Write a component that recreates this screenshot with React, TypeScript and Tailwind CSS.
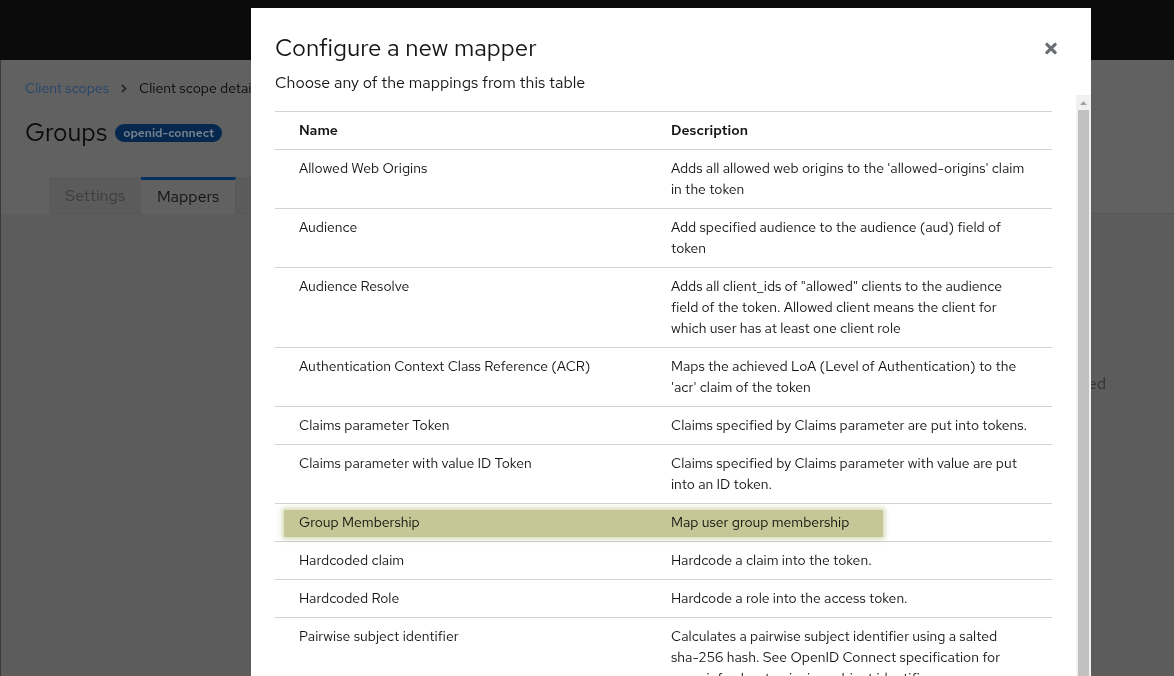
import React from "react";

type Row = { name: string; desc: string[]; highlight?: boolean };

const rows: Row[] = [
  { name: "Allowed Web Origins", desc: ["Adds all allowed web origins to the 'allowed-origins' claim", "in the token"] },
  { name: "Audience", desc: ["Add specified audience to the audience (aud) field of", "token"] },
  {
    name: "Audience Resolve",
    desc: [
      'Adds all client_ids of "allowed" clients to the audience',
      "field of the token. Allowed client means the client for",
      "which user has at least one client role",
    ],
  },
  {
    name: "Authentication Context Class Reference (ACR)",
    desc: ["Maps the achieved LoA (Level of Authentication) to the", "'acr' claim of the token"],
  },
  { name: "Claims parameter Token", desc: ["Claims specified by Claims parameter are put into tokens."] },
  {
    name: "Claims parameter with value ID Token",
    desc: ["Claims specified by Claims parameter with value are put", "into an ID token."],
  },
  { name: "Group Membership", desc: ["Map user group membership"], highlight: true },
  { name: "Hardcoded claim", desc: ["Hardcode a claim into the token."] },
  { name: "Hardcoded Role", desc: ["Hardcode a role into the access token."] },
  {
    name: "Pairwise subject identifier",
    desc: [
      "Calculates a pairwise subject identifier using a salted",
      "sha-256 hash. See OpenID Connect specification for",
      "more info about pairwise subject identifiers.",
    ],
  },
];

function CloseIcon() {
  return (
    <svg width="12" height="17" viewBox="0 0 352 512" fill="#6a6e73" aria-hidden="true">
      <path d="M242.72 256l100.07-100.07c12.28-12.28 12.28-32.19 0-44.48l-22.24-22.24c-12.28-12.28-32.19-12.28-44.48 0L176 189.28 75.930 89.21c-12.28-12.28-32.19-12.28-44.48 0L9.21 111.45c-12.28 12.28-12.28 32.19 0 44.48L109.28 256 9.21 356.07c-12.28 12.28-12.28 32.19 0 44.48l22.24 22.24c12.28 12.28 32.2 12.28 44.48 0L176 322.72l100.07 100.07c12.28 12.28 32.2 12.28 44.48 0l22.24-22.24c12.28-12.28 12.28-32.19 0-44.48L242.72 256z" />
    </svg>
  );
}

export default function App() {
  return (
    <div className="relative h-[676px] w-[1174px] overflow-hidden font-['Red_Hat_Text',Roboto,sans-serif] text-[#151515]">
      {/* dimmed background page */}
      <div className="flex h-full flex-col bg-[#616161]">
        <header className="h-[60px] shrink-0 bg-[#0b0b0b]" />
        <div className="flex flex-1 flex-col border-l border-[#3a3a3a]">
          <div className="pl-6 pt-[18px]">
            <nav className="flex items-center text-[14px] leading-[20px]">
              <span className="text-[#23466b]">Client scopes</span>
              <svg className="mx-[12px]" width="6" height="9" viewBox="0 0 6 9" aria-hidden="true">
                <path d="M1 1l3.5 3.5L1 8" stroke="#2a2a2a" strokeWidth="1.8" fill="none" />
              </svg>
              <span className="text-[#0a0a0a]">Client scope details</span>
            </nav>
            <div className="mt-5 flex items-center gap-2">
              <h1 className="text-[25px] leading-[30px] text-[#0a0a0a]">Groups</h1>
              <span className="rounded-full bg-[#06284e] px-2 text-[12px] font-semibold leading-[18px] text-[#77828f]">
                openid-connect
              </span>
            </div>
            <div className="mt-[29px] flex pl-6 text-[16px] leading-[24px]">
              <div className="flex h-[37px] items-center border-b border-[#575757] bg-[#5b5b5b] px-4 pt-[2px] text-[#3d3d3d]">
                Settings
              </div>
              <div className="flex h-[37px] items-center border-r border-t-[3px] border-r-[#575757] border-t-[#03305e] px-4 text-[#121212]">
                Mappers
              </div>
              <div className="flex h-[37px] items-center border-b border-[#575757] bg-[#5b5b5b] px-4 pt-[2px] text-[#3d3d3d]">
                Scope
              </div>
              <div className="flex-1 border-b border-[#575757]" />
            </div>
          </div>
          <div className="flex-1 bg-[#5c5c5c] pr-[68px] pt-[158px] text-right text-[16px] leading-[24px] text-[#323333]">
            No mappers have been added yet. Add predefined
          </div>
        </div>
      </div>

      {/* modal */}
      <div className="absolute left-[251px] top-[8px] w-[840px] bg-white">
        <div className="flex items-start justify-between pl-6 pr-[34px] pt-6">
          <h2 className="text-[24px] leading-[31px] text-[#151515]">Configure a new mapper</h2>
          <button className="mt-[8px] flex items-center" aria-label="Close">
            <CloseIcon />
          </button>
        </div>
        <p className="mt-[8px] pl-6 text-[16px] leading-[24px] text-[#151515]">
          Choose any of the mappings from this table
        </p>
        <div className="flex">
          <div className="flex-1 px-6 pt-4">
            <div className="border-t border-[#d2d2d2] text-[14px] leading-[21px]">
              <div className="grid grid-cols-[372px_405px] border-b border-[#d2d2d2] font-semibold">
                <div className="px-6 py-2">Name</div>
                <div className="px-6 py-2">Description</div>
              </div>
              {rows.map((r) => (
                <div key={r.name} className="relative grid grid-cols-[372px_405px] border-b border-[#d2d2d2]">
                  <div className="px-6 py-2 whitespace-nowrap">{r.name}</div>
                  <div className="px-6 py-2 whitespace-nowrap">
                    {r.desc.map((l, i) => (
                      <div key={i}>{l}</div>
                    ))}
                  </div>
                  {r.highlight && (
                    <div className="pointer-events-none absolute left-[9px] top-[6px] h-[27px] w-[599px] bg-[#c5c896] mix-blend-multiply shadow-[0_0_5px_2px_rgba(180,185,120,0.55)]" />
                  )}
                </div>
              ))}
            </div>
          </div>
          <div className="flex w-[15px] shrink-0 flex-col bg-[#f1f1f1]">
            <div className="flex h-[15px] items-center justify-center">
              <svg width="7" height="4" viewBox="0 0 7 4" aria-hidden="true">
                <path d="M3.5 0L7 4H0z" fill="#a3a3a3" />
              </svg>
            </div>
            <div className="mx-[2px] flex-1 bg-[#c1c1c1]" />
          </div>
        </div>
      </div>
    </div>
  );
}
